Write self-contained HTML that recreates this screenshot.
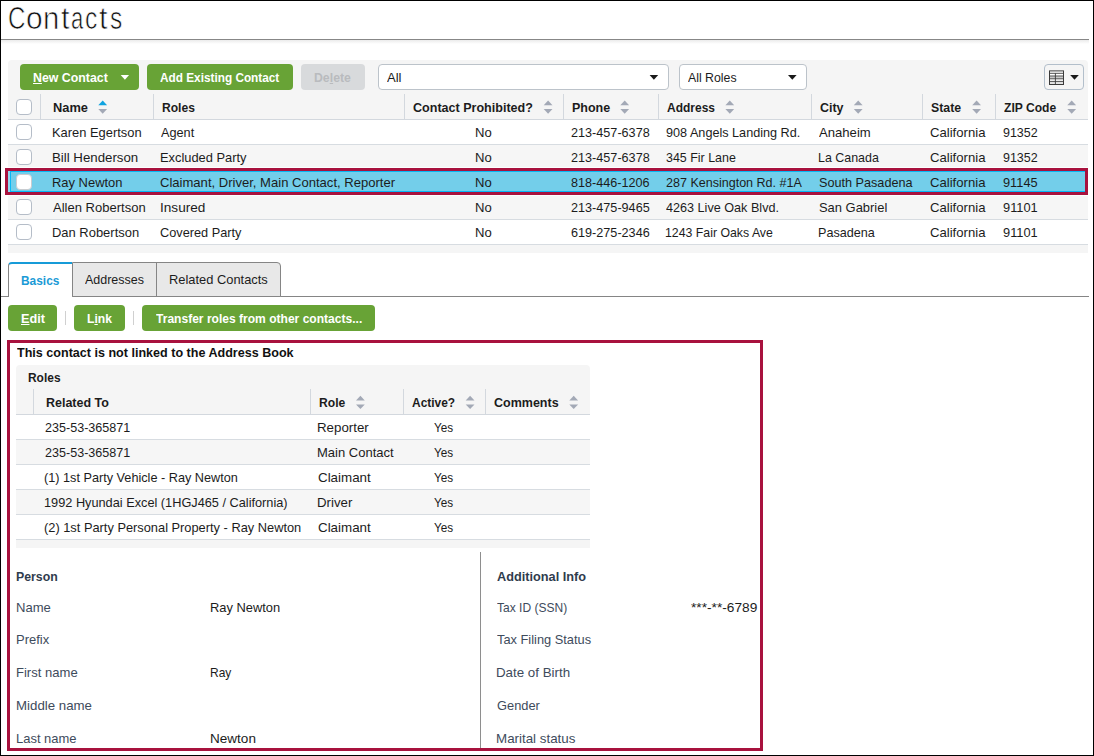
<!DOCTYPE html>
<html><head><meta charset="utf-8"><title>Contacts</title>
<style>
html,body{margin:0;padding:0;background:#fff;}
body{width:1094px;height:756px;position:relative;overflow:hidden;font-family:"Liberation Sans", sans-serif;font-size:13px;color:#1c1c1c;}
.a,.t,svg{position:absolute;}
.a{box-sizing:border-box;}
.t{white-space:pre;line-height:1;transform-origin:0 0;}
.t u{text-decoration:underline;text-underline-offset:1px;}
.g{background:#68a336;border-radius:4px;}
.hs{width:1px;background:#d3d8de;}
.rl{height:1px;background:#d7dce1;}
.cb{width:16px;height:16px;border:1px solid #b5bdc8;border-radius:4px;background:#fff;left:16px;}
.cbs{border-color:#c9ccd0;}
.sel{background:#fff;border:1px solid #bcc3ca;border-radius:4px;}
</style></head><body>
<div class="a " style="left:1px;top:39px;width:1088px;height:1px;background:#878787"></div>
<div class="a " style="left:1px;top:40px;width:1088px;height:4px;background:linear-gradient(#ebebeb,#fff)"></div>
<div class="a " style="left:8px;top:60px;width:1080px;height:60px;background:#f5f5f5;border-radius:4px 4px 0 0"></div>
<div class="a g" style="left:20px;top:64px;width:119px;height:26px;"></div>
<div class="a g" style="left:147px;top:64px;width:146px;height:26px;"></div>
<div class="a " style="left:301px;top:64px;width:64px;height:26px;background:#d8dadc;border-radius:4px"></div>
<div class="a sel" style="left:378px;top:64px;width:291px;height:26px;"></div>
<div class="a sel" style="left:679px;top:64px;width:128px;height:26px;"></div>
<div class="a " style="left:1044px;top:64px;width:40px;height:26px;border:1px solid #b3bfcb;border-radius:4px"></div>
<svg style="left:120px;top:75px" width="11" height="6" viewBox="0 0 11 6"><g transform="translate(0.70 0.10)"><path d="M0 0H8.4L4.2 4.7Z" fill="#fff"/></g></svg>
<svg style="left:649px;top:75px" width="11" height="6" viewBox="0 0 11 6"><g transform="translate(0.60 0.00)"><path d="M0 0H8.6L4.3 4.7Z" fill="#1a1a1a"/></g></svg>
<svg style="left:788px;top:75px" width="10" height="6" viewBox="0 0 10 6"><g transform="translate(0.00 0.00)"><path d="M0 0H8.6L4.3 4.7Z" fill="#1a1a1a"/></g></svg>
<svg style="left:1070px;top:75px" width="10" height="6" viewBox="0 0 10 6"><g transform="translate(0.20 0.00)"><path d="M0 0H8.6L4.3 4.7Z" fill="#1a1a1a"/></g></svg>
<svg style="left:1049px;top:70.4px" width="15" height="15" viewBox="0 0 15 15"><rect x="0.5" y="0.9" width="14" height="13.6" fill="#fff" stroke="#3a3a3a" stroke-width="1"/><rect x="1" y="6.3" width="13" height="2.2" fill="#c8c8c8"/><rect x="1" y="11.6" width="13" height="2.2" fill="#dcdcdc"/><path d="M0.5 3.3H14.5M0.5 6H14.5M0.5 8.8H14.5M0.5 11.4H14.5M6.4 3.3V14.2" stroke="#3a3a3a" stroke-width="0.9" fill="none"/></svg>
<div class="a hs" style="left:40px;top:94px;width:1px;height:25px;"></div>
<div class="a hs" style="left:153px;top:94px;width:1px;height:25px;"></div>
<div class="a hs" style="left:404px;top:94px;width:1px;height:25px;"></div>
<div class="a hs" style="left:563px;top:94px;width:1px;height:25px;"></div>
<div class="a hs" style="left:658px;top:94px;width:1px;height:25px;"></div>
<div class="a hs" style="left:811px;top:94px;width:1px;height:25px;"></div>
<div class="a hs" style="left:922px;top:94px;width:1px;height:25px;"></div>
<div class="a hs" style="left:995px;top:94px;width:1px;height:25px;"></div>
<div class="a " style="left:8px;top:119px;width:1080px;height:1px;background:#d3d8de"></div>
<svg style="left:98px;top:100px" width="11" height="15" viewBox="0 0 11 15"><g transform="translate(0.30 0.50)"><path d="M0 4.8L4.4 0L8.8 4.8Z" fill="#0fa3e0"/><path d="M0 8.6H8.8L4.4 13.3Z" fill="#a3a9b6"/></g></svg>
<svg style="left:543px;top:100px" width="11" height="15" viewBox="0 0 11 15"><g transform="translate(0.70 0.50)"><path d="M0 4.8L4.4 0L8.8 4.8Z" fill="#a3a9b6"/><path d="M0 8.6H8.8L4.4 13.3Z" fill="#a3a9b6"/></g></svg>
<svg style="left:620px;top:100px" width="11" height="15" viewBox="0 0 11 15"><g transform="translate(0.30 0.50)"><path d="M0 4.8L4.4 0L8.8 4.8Z" fill="#a3a9b6"/><path d="M0 8.6H8.8L4.4 13.3Z" fill="#a3a9b6"/></g></svg>
<svg style="left:725px;top:100px" width="11" height="15" viewBox="0 0 11 15"><g transform="translate(0.40 0.50)"><path d="M0 4.8L4.4 0L8.8 4.8Z" fill="#a3a9b6"/><path d="M0 8.6H8.8L4.4 13.3Z" fill="#a3a9b6"/></g></svg>
<svg style="left:853px;top:100px" width="11" height="15" viewBox="0 0 11 15"><g transform="translate(0.80 0.50)"><path d="M0 4.8L4.4 0L8.8 4.8Z" fill="#a3a9b6"/><path d="M0 8.6H8.8L4.4 13.3Z" fill="#a3a9b6"/></g></svg>
<svg style="left:972px;top:100px" width="11" height="15" viewBox="0 0 11 15"><g transform="translate(0.20 0.50)"><path d="M0 4.8L4.4 0L8.8 4.8Z" fill="#a3a9b6"/><path d="M0 8.6H8.8L4.4 13.3Z" fill="#a3a9b6"/></g></svg>
<svg style="left:1067px;top:100px" width="11" height="15" viewBox="0 0 11 15"><g transform="translate(0.30 0.50)"><path d="M0 4.8L4.4 0L8.8 4.8Z" fill="#a3a9b6"/><path d="M0 8.6H8.8L4.4 13.3Z" fill="#a3a9b6"/></g></svg>
<div class="a cb" style="left:16px;top:99px;width:16px;height:16px;"></div>
<div class="a " style="left:8px;top:120px;width:1080px;height:24px;background:#fff"></div>
<div class="a rl" style="left:8px;top:144px;width:1080px;height:1px;"></div>
<div class="a " style="left:8px;top:145px;width:1080px;height:24px;background:#f6f6f6"></div>
<div class="a rl" style="left:8px;top:169px;width:1080px;height:1px;"></div>
<div class="a " style="left:8px;top:170px;width:1080px;height:24px;background:#fff"></div>
<div class="a rl" style="left:8px;top:194px;width:1080px;height:1px;"></div>
<div class="a " style="left:8px;top:195px;width:1080px;height:24px;background:#f6f6f6"></div>
<div class="a rl" style="left:8px;top:219px;width:1080px;height:1px;"></div>
<div class="a " style="left:8px;top:220px;width:1080px;height:24px;background:#fff"></div>
<div class="a rl" style="left:8px;top:244px;width:1080px;height:1px;"></div>
<div class="a " style="left:8px;top:245px;width:1080px;height:8px;background:#f5f5f5"></div>
<div class="a " style="left:8px;top:167px;width:1080px;height:1px;background:#fdfefe"></div>
<div class="a " style="left:8px;top:195px;width:1080px;height:1px;background:#fdfefe"></div>
<div class="a " style="left:5px;top:168px;width:1083px;height:27px;background:#73ceea;border:3px solid #a8123e"></div>
<div class="a " style="left:8px;top:171px;width:2px;height:21px;background:#8fd8f1"></div>
<div class="a " style="left:10px;top:171px;width:1075px;height:1px;background:#08b8f6"></div>
<div class="a " style="left:10px;top:191px;width:1075px;height:1px;background:#08b8f6"></div>
<div class="a " style="left:10px;top:171px;width:1px;height:21px;background:#08b8f6"></div>
<div class="a cb" style="left:16px;top:124px;width:16px;height:16px;"></div>
<div class="a cb" style="left:16px;top:149px;width:16px;height:16px;"></div>
<div class="a cb cbs" style="left:16px;top:174px;width:16px;height:16px;"></div>
<div class="a cb" style="left:16px;top:199px;width:16px;height:16px;"></div>
<div class="a cb" style="left:16px;top:224px;width:16px;height:16px;"></div>
<div class="a " style="left:1px;top:296px;width:1088px;height:1px;background:#858585"></div>
<div class="a " style="left:72px;top:262px;width:209px;height:35px;background:#e8e8e8;border:1px solid #858585;border-radius:0 4px 0 0"></div>
<div class="a " style="left:156px;top:263px;width:1px;height:33px;background:#858585"></div>
<div class="a " style="left:8px;top:262px;width:64px;height:35px;background:#fff;border-left:1px solid #858585;border-top:2px solid #169bd8;border-radius:4px 0 0 0"></div>
<div class="a g" style="left:8px;top:305px;width:49px;height:26px;"></div>
<div class="a g" style="left:74px;top:305px;width:51px;height:26px;"></div>
<div class="a g" style="left:142px;top:305px;width:233px;height:26px;"></div>
<div class="a " style="left:65px;top:311px;width:1px;height:14px;background:#d0d0d0"></div>
<div class="a " style="left:133px;top:311px;width:1px;height:14px;background:#d0d0d0"></div>
<div class="a " style="left:7px;top:340px;width:756px;height:411px;border:3px solid #a8123e"></div>
<div class="a " style="left:16px;top:365px;width:574px;height:50px;background:#f5f5f5;border-radius:4px 4px 0 0"></div>
<div class="a hs" style="left:33px;top:389px;width:1px;height:25px;"></div>
<div class="a hs" style="left:310px;top:389px;width:1px;height:25px;"></div>
<div class="a hs" style="left:403px;top:389px;width:1px;height:25px;"></div>
<div class="a hs" style="left:485px;top:389px;width:1px;height:25px;"></div>
<div class="a " style="left:16px;top:414px;width:574px;height:1px;background:#d3d8de"></div>
<div class="a " style="left:16px;top:415px;width:574px;height:24px;background:#fff"></div>
<div class="a rl" style="left:16px;top:439px;width:574px;height:1px;"></div>
<div class="a " style="left:16px;top:440px;width:574px;height:24px;background:#f6f6f6"></div>
<div class="a rl" style="left:16px;top:464px;width:574px;height:1px;"></div>
<div class="a " style="left:16px;top:465px;width:574px;height:24px;background:#fff"></div>
<div class="a rl" style="left:16px;top:489px;width:574px;height:1px;"></div>
<div class="a " style="left:16px;top:490px;width:574px;height:24px;background:#f6f6f6"></div>
<div class="a rl" style="left:16px;top:514px;width:574px;height:1px;"></div>
<div class="a " style="left:16px;top:515px;width:574px;height:24px;background:#fff"></div>
<div class="a rl" style="left:16px;top:539px;width:574px;height:1px;"></div>
<div class="a " style="left:16px;top:540px;width:574px;height:8px;background:#f5f5f5"></div>
<svg style="left:356px;top:395px" width="10" height="16" viewBox="0 0 10 16"><g transform="translate(0.00 0.80)"><path d="M0 4.8L4.4 0L8.8 4.8Z" fill="#a3a9b6"/><path d="M0 8.6H8.8L4.4 13.3Z" fill="#a3a9b6"/></g></svg>
<svg style="left:465px;top:395px" width="11" height="16" viewBox="0 0 11 16"><g transform="translate(0.70 0.80)"><path d="M0 4.8L4.4 0L8.8 4.8Z" fill="#a3a9b6"/><path d="M0 8.6H8.8L4.4 13.3Z" fill="#a3a9b6"/></g></svg>
<svg style="left:569px;top:395px" width="11" height="16" viewBox="0 0 11 16"><g transform="translate(0.30 0.80)"><path d="M0 4.8L4.4 0L8.8 4.8Z" fill="#a3a9b6"/><path d="M0 8.6H8.8L4.4 13.3Z" fill="#a3a9b6"/></g></svg>
<div class="a " style="left:480px;top:552px;width:1px;height:196px;background:#8e8e8e"></div>
<h1 style="margin:0;font-size:13px;font-weight:normal"><span class="t" style="left:7.97px;top:1.51px;font-size:32px;font-weight:normal;color:#111;transform:scaleX(0.7561);-webkit-text-stroke:0.7px #fff;">C</span><span class="t" style="left:25.66px;top:1.51px;font-size:32px;font-weight:normal;color:#111;transform:scaleX(0.9355);-webkit-text-stroke:0.7px #fff;">o</span><span class="t" style="left:43.07px;top:1.51px;font-size:32px;font-weight:normal;color:#111;transform:scaleX(0.9143);-webkit-text-stroke:0.7px #fff;">n</span><span class="t" style="left:60.80px;top:1.51px;font-size:32px;font-weight:normal;color:#111;transform:scaleX(0.9556);-webkit-text-stroke:0.7px #fff;">t</span><span class="t" style="left:70.71px;top:1.51px;font-size:32px;font-weight:normal;color:#111;transform:scaleX(0.6882);-webkit-text-stroke:0.7px #fff;">a</span><span class="t" style="left:85.23px;top:1.51px;font-size:32px;font-weight:normal;color:#111;transform:scaleX(0.7655);-webkit-text-stroke:0.7px #fff;">c</span><span class="t" style="left:99.40px;top:1.51px;font-size:32px;font-weight:normal;color:#111;transform:scaleX(0.9556);-webkit-text-stroke:0.7px #fff;">t</span><span class="t" style="left:109.62px;top:1.51px;font-size:32px;font-weight:normal;color:#111;transform:scaleX(0.7655);-webkit-text-stroke:0.7px #fff;">s</span></h1>
<span class="t" style="left:32.54px;top:71.00px;font-size:13px;font-weight:bold;color:#fff;transform:scaleX(0.9499);"><u>N</u>ew Contact</span>
<span class="t" style="left:160.13px;top:71.00px;font-size:13px;font-weight:bold;color:#fff;transform:scaleX(0.9075);">Add Existing Contact</span>
<span class="t" style="left:314.14px;top:71.00px;font-size:13px;font-weight:bold;color:#b9bbbe;transform:scaleX(0.9447);">De<u>l</u>ete</span>
<span class="t" style="left:386.90px;top:71.00px;font-size:13px;font-weight:normal;color:#1c1c1c;transform:scaleX(1.0030);">All</span>
<span class="t" style="left:688.20px;top:71.00px;font-size:13px;font-weight:normal;color:#1c1c1c;transform:scaleX(0.9470);">All Roles</span>
<span class="t" style="left:52.81px;top:101.00px;font-size:13px;font-weight:bold;color:#1c1c1c;transform:scaleX(0.9860);">Name</span>
<span class="t" style="left:161.86px;top:101.00px;font-size:13px;font-weight:bold;color:#1c1c1c;transform:scaleX(0.9304);">Roles</span>
<span class="t" style="left:413.02px;top:101.00px;font-size:13px;font-weight:bold;color:#1c1c1c;transform:scaleX(0.9652);">Contact Prohibited?</span>
<span class="t" style="left:571.83px;top:101.00px;font-size:13px;font-weight:bold;color:#1c1c1c;transform:scaleX(0.9612);">Phone</span>
<span class="t" style="left:666.82px;top:101.00px;font-size:13px;font-weight:bold;color:#1c1c1c;transform:scaleX(0.9221);">Address</span>
<span class="t" style="left:819.72px;top:101.00px;font-size:13px;font-weight:bold;color:#1c1c1c;transform:scaleX(0.9572);">City</span>
<span class="t" style="left:931.22px;top:101.00px;font-size:13px;font-weight:bold;color:#1c1c1c;transform:scaleX(0.9466);">State</span>
<span class="t" style="left:1003.92px;top:101.00px;font-size:13px;font-weight:bold;color:#1c1c1c;transform:scaleX(0.9298);">ZIP Code</span>
<span class="t" style="left:51.61px;top:126.00px;font-size:13px;font-weight:normal;color:#1c1c1c;transform:scaleX(0.9921);">Karen Egertson</span>
<span class="t" style="left:161.00px;top:126.00px;font-size:13px;font-weight:normal;color:#1c1c1c;transform:scaleX(0.9776);">Agent</span>
<span class="t" style="left:474.59px;top:126.00px;font-size:13px;font-weight:normal;color:#1c1c1c;transform:scaleX(1.0074);">No</span>
<span class="t" style="left:570.52px;top:126.00px;font-size:13px;font-weight:normal;color:#1c1c1c;transform:scaleX(0.9721);">213-457-6378</span>
<span class="t" style="left:665.62px;top:126.00px;font-size:13px;font-weight:normal;color:#1c1c1c;transform:scaleX(0.9726);">908 Angels Landing Rd.</span>
<span class="t" style="left:819.00px;top:126.00px;font-size:13px;font-weight:normal;color:#1c1c1c;transform:scaleX(1.0083);">Anaheim</span>
<span class="t" style="left:929.99px;top:126.00px;font-size:13px;font-weight:normal;color:#1c1c1c;transform:scaleX(1.0095);">California</span>
<span class="t" style="left:1002.72px;top:126.00px;font-size:13px;font-weight:normal;color:#1c1c1c;transform:scaleX(0.9593);">91352</span>
<span class="t" style="left:51.58px;top:151.00px;font-size:13px;font-weight:normal;color:#1c1c1c;transform:scaleX(1.0192);">Bill Henderson</span>
<span class="t" style="left:160.01px;top:151.00px;font-size:13px;font-weight:normal;color:#1c1c1c;transform:scaleX(0.9892);">Excluded Party</span>
<span class="t" style="left:474.59px;top:151.00px;font-size:13px;font-weight:normal;color:#1c1c1c;transform:scaleX(1.0074);">No</span>
<span class="t" style="left:570.52px;top:151.00px;font-size:13px;font-weight:normal;color:#1c1c1c;transform:scaleX(0.9721);">213-457-6378</span>
<span class="t" style="left:665.82px;top:151.00px;font-size:13px;font-weight:normal;color:#1c1c1c;transform:scaleX(0.9575);">345 Fir Lane</span>
<span class="t" style="left:818.04px;top:151.00px;font-size:13px;font-weight:normal;color:#1c1c1c;transform:scaleX(0.9556);">La Canada</span>
<span class="t" style="left:929.99px;top:151.00px;font-size:13px;font-weight:normal;color:#1c1c1c;transform:scaleX(1.0095);">California</span>
<span class="t" style="left:1002.72px;top:151.00px;font-size:13px;font-weight:normal;color:#1c1c1c;transform:scaleX(0.9593);">91352</span>
<span class="t" style="left:51.60px;top:176.00px;font-size:13px;font-weight:normal;color:#1c1c1c;transform:scaleX(0.9960);">Ray Newton</span>
<span class="t" style="left:160.40px;top:176.00px;font-size:13px;font-weight:normal;color:#1c1c1c;transform:scaleX(1.0041);">Claimant, Driver, Main Contact, Reporter</span>
<span class="t" style="left:474.59px;top:176.00px;font-size:13px;font-weight:normal;color:#1c1c1c;transform:scaleX(1.0074);">No</span>
<span class="t" style="left:570.61px;top:176.00px;font-size:13px;font-weight:normal;color:#1c1c1c;transform:scaleX(0.9709);">818-446-1206</span>
<span class="t" style="left:665.62px;top:176.00px;font-size:13px;font-weight:normal;color:#1c1c1c;transform:scaleX(0.9639);">287 Kensington Rd. #1A</span>
<span class="t" style="left:818.51px;top:176.00px;font-size:13px;font-weight:normal;color:#1c1c1c;transform:scaleX(0.9728);">South Pasadena</span>
<span class="t" style="left:929.99px;top:176.00px;font-size:13px;font-weight:normal;color:#1c1c1c;transform:scaleX(1.0095);">California</span>
<span class="t" style="left:1002.71px;top:176.00px;font-size:13px;font-weight:normal;color:#1c1c1c;transform:scaleX(0.9837);">91145</span>
<span class="t" style="left:52.60px;top:201.00px;font-size:13px;font-weight:normal;color:#1c1c1c;transform:scaleX(1.0014);">Allen Robertson</span>
<span class="t" style="left:159.75px;top:201.00px;font-size:13px;font-weight:normal;color:#1c1c1c;transform:scaleX(1.0452);">Insured</span>
<span class="t" style="left:474.59px;top:201.00px;font-size:13px;font-weight:normal;color:#1c1c1c;transform:scaleX(1.0074);">No</span>
<span class="t" style="left:570.52px;top:201.00px;font-size:13px;font-weight:normal;color:#1c1c1c;transform:scaleX(0.9721);">213-475-9465</span>
<span class="t" style="left:666.01px;top:201.00px;font-size:13px;font-weight:normal;color:#1c1c1c;transform:scaleX(0.9710);">4263 Live Oak Blvd.</span>
<span class="t" style="left:818.50px;top:201.00px;font-size:13px;font-weight:normal;color:#1c1c1c;transform:scaleX(0.9946);">San Gabriel</span>
<span class="t" style="left:929.99px;top:201.00px;font-size:13px;font-weight:normal;color:#1c1c1c;transform:scaleX(1.0095);">California</span>
<span class="t" style="left:1002.71px;top:201.00px;font-size:13px;font-weight:normal;color:#1c1c1c;transform:scaleX(0.9866);">91101</span>
<span class="t" style="left:51.60px;top:226.00px;font-size:13px;font-weight:normal;color:#1c1c1c;transform:scaleX(0.9964);">Dan Robertson</span>
<span class="t" style="left:160.41px;top:226.00px;font-size:13px;font-weight:normal;color:#1c1c1c;transform:scaleX(0.9807);">Covered Party</span>
<span class="t" style="left:474.59px;top:226.00px;font-size:13px;font-weight:normal;color:#1c1c1c;transform:scaleX(1.0074);">No</span>
<span class="t" style="left:570.52px;top:226.00px;font-size:13px;font-weight:normal;color:#1c1c1c;transform:scaleX(0.9721);">619-275-2346</span>
<span class="t" style="left:665.35px;top:226.00px;font-size:13px;font-weight:normal;color:#1c1c1c;transform:scaleX(0.9468);">1243 Fair Oaks Ave</span>
<span class="t" style="left:818.03px;top:226.00px;font-size:13px;font-weight:normal;color:#1c1c1c;transform:scaleX(0.9701);">Pasadena</span>
<span class="t" style="left:929.99px;top:226.00px;font-size:13px;font-weight:normal;color:#1c1c1c;transform:scaleX(1.0095);">California</span>
<span class="t" style="left:1002.71px;top:226.00px;font-size:13px;font-weight:normal;color:#1c1c1c;transform:scaleX(0.9866);">91101</span>
<span class="t" style="left:21.17px;top:274.00px;font-size:13px;font-weight:bold;color:#1a9ad6;transform:scaleX(0.9165);">Basics</span>
<span class="t" style="left:85.00px;top:273.00px;font-size:13px;font-weight:normal;color:#1c1c1c;transform:scaleX(0.9603);">Addresses</span>
<span class="t" style="left:168.51px;top:273.00px;font-size:13px;font-weight:normal;color:#1c1c1c;transform:scaleX(0.9906);">Related Contacts</span>
<span class="t" style="left:20.52px;top:312.00px;font-size:13px;font-weight:bold;color:#fff;transform:scaleX(0.9778);"><u>E</u>dit</span>
<span class="t" style="left:87.06px;top:312.00px;font-size:13px;font-weight:bold;color:#fff;transform:scaleX(0.9310);">L<u>i</u>nk</span>
<span class="t" style="left:156.11px;top:312.00px;font-size:13px;font-weight:bold;color:#fff;transform:scaleX(0.9269);">Transfer roles from other contacts...</span>
<span class="t" style="left:16.90px;top:345.70px;font-size:13px;font-weight:bold;color:#111;transform:scaleX(0.9661);">This contact is not linked to the Address Book</span>
<span class="t" style="left:27.87px;top:371.00px;font-size:13px;font-weight:bold;color:#1c1c1c;transform:scaleX(0.9187);">Roles</span>
<span class="t" style="left:45.93px;top:396.00px;font-size:13px;font-weight:bold;color:#1c1c1c;transform:scaleX(0.9603);">Related To</span>
<span class="t" style="left:319.05px;top:396.00px;font-size:13px;font-weight:bold;color:#1c1c1c;transform:scaleX(0.9317);">Role</span>
<span class="t" style="left:411.52px;top:396.00px;font-size:13px;font-weight:bold;color:#1c1c1c;transform:scaleX(0.9190);">Active?</span>
<span class="t" style="left:494.12px;top:396.00px;font-size:13px;font-weight:bold;color:#1c1c1c;transform:scaleX(0.9615);">Comments</span>
<span class="t" style="left:44.62px;top:421.00px;font-size:13px;font-weight:normal;color:#1c1c1c;transform:scaleX(0.9671);">235-53-365871</span>
<span class="t" style="left:317.28px;top:421.00px;font-size:13px;font-weight:normal;color:#1c1c1c;transform:scaleX(1.0233);">Reporter</span>
<span class="t" style="left:434.32px;top:421.00px;font-size:13px;font-weight:normal;color:#1c1c1c;transform:scaleX(0.9026);">Yes</span>
<span class="t" style="left:44.62px;top:446.00px;font-size:13px;font-weight:normal;color:#1c1c1c;transform:scaleX(0.9671);">235-53-365871</span>
<span class="t" style="left:317.30px;top:446.00px;font-size:13px;font-weight:normal;color:#1c1c1c;transform:scaleX(1.0003);">Main Contact</span>
<span class="t" style="left:434.32px;top:446.00px;font-size:13px;font-weight:normal;color:#1c1c1c;transform:scaleX(0.9026);">Yes</span>
<span class="t" style="left:44.42px;top:471.00px;font-size:13px;font-weight:normal;color:#1c1c1c;transform:scaleX(0.9753);">(1) 1st Party Vehicle - Ray Newton</span>
<span class="t" style="left:317.68px;top:471.00px;font-size:13px;font-weight:normal;color:#1c1c1c;transform:scaleX(1.0279);">Claimant</span>
<span class="t" style="left:434.32px;top:471.00px;font-size:13px;font-weight:normal;color:#1c1c1c;transform:scaleX(0.9026);">Yes</span>
<span class="t" style="left:44.32px;top:496.00px;font-size:13px;font-weight:normal;color:#1c1c1c;transform:scaleX(0.9800);">1992 Hyundai Excel (1HGJ465 / California)</span>
<span class="t" style="left:317.28px;top:496.00px;font-size:13px;font-weight:normal;color:#1c1c1c;transform:scaleX(1.0198);">Driver</span>
<span class="t" style="left:434.32px;top:496.00px;font-size:13px;font-weight:normal;color:#1c1c1c;transform:scaleX(0.9026);">Yes</span>
<span class="t" style="left:44.41px;top:521.00px;font-size:13px;font-weight:normal;color:#1c1c1c;transform:scaleX(0.9862);">(2) 1st Party Personal Property - Ray Newton</span>
<span class="t" style="left:317.68px;top:521.00px;font-size:13px;font-weight:normal;color:#1c1c1c;transform:scaleX(1.0279);">Claimant</span>
<span class="t" style="left:434.32px;top:521.00px;font-size:13px;font-weight:normal;color:#1c1c1c;transform:scaleX(0.9026);">Yes</span>
<span class="t" style="left:15.84px;top:570.00px;font-size:13px;font-weight:bold;color:#2f3c4d;transform:scaleX(0.9475);">Person</span>
<span class="t" style="left:15.60px;top:600.80px;font-size:13px;font-weight:normal;color:#3e4b5c;transform:scaleX(1.0046);">Name</span>
<span class="t" style="left:15.60px;top:633.00px;font-size:13px;font-weight:normal;color:#3e4b5c;transform:scaleX(0.9991);">Prefix</span>
<span class="t" style="left:15.60px;top:666.00px;font-size:13px;font-weight:normal;color:#3e4b5c;transform:scaleX(1.0038);">First name</span>
<span class="t" style="left:15.58px;top:699.00px;font-size:13px;font-weight:normal;color:#3e4b5c;transform:scaleX(1.0206);">Middle name</span>
<span class="t" style="left:15.60px;top:731.60px;font-size:13px;font-weight:normal;color:#3e4b5c;transform:scaleX(0.9971);">Last name</span>
<span class="t" style="left:209.61px;top:600.80px;font-size:13px;font-weight:normal;color:#1c1c1c;transform:scaleX(0.9916);">Ray Newton</span>
<span class="t" style="left:209.68px;top:666.00px;font-size:13px;font-weight:normal;color:#1c1c1c;transform:scaleX(0.9223);">Ray</span>
<span class="t" style="left:209.56px;top:731.60px;font-size:13px;font-weight:normal;color:#1c1c1c;transform:scaleX(1.0415);">Newton</span>
<span class="t" style="left:496.81px;top:570.00px;font-size:13px;font-weight:bold;color:#2f3c4d;transform:scaleX(0.9785);">Additional Info</span>
<span class="t" style="left:496.91px;top:600.80px;font-size:13px;font-weight:normal;color:#3e4b5c;transform:scaleX(0.9251);">Tax ID (SSN)</span>
<span class="t" style="left:496.90px;top:633.00px;font-size:13px;font-weight:normal;color:#3e4b5c;transform:scaleX(0.9866);">Tax Filing Status</span>
<span class="t" style="left:496.07px;top:666.00px;font-size:13px;font-weight:normal;color:#3e4b5c;transform:scaleX(1.0252);">Date of Birth</span>
<span class="t" style="left:496.51px;top:699.00px;font-size:13px;font-weight:normal;color:#3e4b5c;transform:scaleX(0.9875);">Gender</span>
<span class="t" style="left:496.07px;top:731.60px;font-size:13px;font-weight:normal;color:#3e4b5c;transform:scaleX(1.0276);">Marital status</span>
<span class="t" style="left:690.79px;top:600.80px;font-size:13px;font-weight:normal;color:#1c1c1c;transform:scaleX(1.0540);">***-**-6789</span>
<div class="a" style="left:0;top:0;width:1094px;height:756px;border:1px solid #000;pointer-events:none"></div>
</body></html>
